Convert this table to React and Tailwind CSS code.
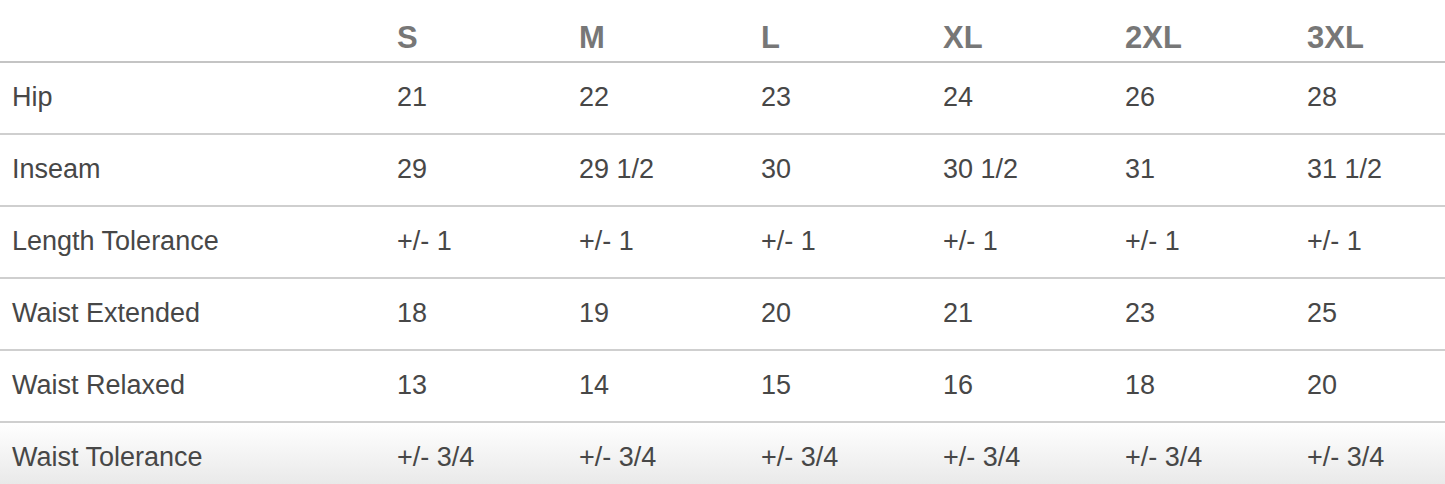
import React from "react";

const sizes = ["S", "M", "L", "XL", "2XL", "3XL"];
const rows = [
  ["Hip", "21", "22", "23", "24", "26", "28"],
  ["Inseam", "29", "29 1/2", "30", "30 1/2", "31", "31 1/2"],
  ["Length Tolerance", "+/- 1", "+/- 1", "+/- 1", "+/- 1", "+/- 1", "+/- 1"],
  ["Waist Extended", "18", "19", "20", "21", "23", "25"],
  ["Waist Relaxed", "13", "14", "15", "16", "18", "20"],
  ["Waist Tolerance", "+/- 3/4", "+/- 3/4", "+/- 3/4", "+/- 3/4", "+/- 3/4", "+/- 3/4"],
];

export default function App() {
  return (
    <div className="w-[1445px] h-[484px] overflow-hidden bg-white font-['Liberation_Sans',Arial,sans-serif]">
      <div className="grid grid-cols-[385px_repeat(5,182px)_1fr] h-[63px] border-b-2 border-[#c4c4c4]">
        <div />
        {sizes.map((s) => (
          <div key={s} className="px-3 pt-[23px] text-[31px] leading-[30px] font-bold text-[#777777]">
            {s}
          </div>
        ))}
      </div>
      {rows.map((r, i) => {
        const last = i === rows.length - 1;
        return (
          <div
            key={r[0]}
            className={
              "grid grid-cols-[385px_repeat(5,182px)_1fr] items-center pb-[2px] text-[27px] leading-[30px] text-[#474747] " +
              (last
                ? "h-[70px] bg-gradient-to-b from-white to-[#e6e6e6]"
                : "h-[72px] border-b-2 border-[#cfcfcf]")
            }
          >
            {r.map((c, j) => (
              <div key={j} className="px-3 whitespace-nowrap">
                {c}
              </div>
            ))}
          </div>
        );
      })}
    </div>
  );
}
